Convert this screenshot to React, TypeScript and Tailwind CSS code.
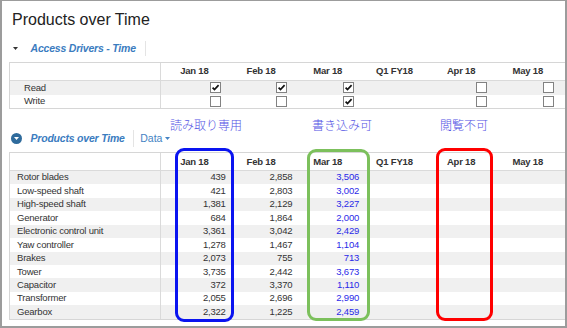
import React from "react";

const months = ["Jan 18", "Feb 18", "Mar 18", "Q1 FY18", "Apr 18", "May 18", ""];

const parts: [string, string, string, string][] = [
  ["Rotor blades", "439", "2,858", "3,506"],
  ["Low-speed shaft", "421", "2,803", "3,002"],
  ["High-speed shaft", "1,381", "2,129", "3,227"],
  ["Generator", "684", "1,864", "2,000"],
  ["Electronic control unit", "3,361", "3,042", "2,429"],
  ["Yaw controller", "1,278", "1,467", "1,104"],
  ["Brakes", "2,073", "755", "713"],
  ["Tower", "3,735", "2,442", "3,673"],
  ["Capacitor", "372", "3,370", "1,110"],
  ["Transformer", "2,055", "2,696", "2,990"],
  ["Gearbox", "2,322", "1,225", "2,459"],
];

// null = no checkbox in that column
const access: { label: string; boxes: (boolean | null)[] }[] = [
  { label: "Read", boxes: [true, true, true, null, false, false, null] },
  { label: "Write", boxes: [false, false, true, null, false, false, null] },
];

function Check({ on }: { on: boolean }) {
  return (
    <span className="inline-flex h-[11px] w-[11px] items-center justify-center border border-[#828282] bg-white">
      {on && (
        <svg width="9" height="9" viewBox="0 0 9 9">
          <path d="M1.6 4.6 L3.5 6.6 L7.6 2.2" fill="none" stroke="#111" strokeWidth="1.7" />
        </svg>
      )}
    </span>
  );
}

function HeaderRow({ h }: { h: string }) {
  return (
    <div className={`flex border-b border-[#dadada] ${h}`}>
      <div className="w-[151px] shrink-0 border-r border-[#dadada]" />
      {months.map((m, i) => (
        <div key={i} className="flex w-[66.7px] shrink-0 items-center justify-center font-bold text-[#333]">
          {m}
        </div>
      ))}
    </div>
  );
}

function Caret({ color }: { color: string }) {
  return (
    <svg width="5" height="3" viewBox="0 0 5 3">
      <path d="M0 0 H5 L2.5 3 Z" fill={color} />
    </svg>
  );
}

export default function App() {
  return (
    <div className="relative h-[328px] w-[567px] overflow-hidden border-x-2 border-b-2 border-t border-[#9c9c9c] bg-white font-['Liberation_Sans',Arial,sans-serif] text-[#333]">
      <div className="h-[30px] pl-[10px] pt-[9px] text-[16px] leading-[20px] text-[#222]">Products over Time</div>

      <div className="mt-[10px] flex h-[15px] items-center">
        <div className="ml-[11px] flex">
          <Caret color="#333" />
        </div>
        <span className="ml-[12.5px] text-[10.5px] font-bold italic tracking-[-0.2px] text-[#3b7cbf]">
          Access Drivers - Time
        </span>
        <div className="ml-[9px] h-[15px] w-px bg-[#e4e4e4]" />
      </div>

      <div className="ml-[7px] mt-[6px] w-[620px] border-y border-l border-[#d6d6d6] text-[9.5px] tracking-[-0.2px]">
        <HeaderRow h="h-[18px]" />
        {access.map((r, ri) => (
          <div key={r.label} className={`flex h-[13.7px] ${ri % 2 === 0 ? "bg-[#f0f0f0]" : "bg-white"}`}>
            <div className="flex w-[151px] shrink-0 items-center border-r border-[#dadada] pl-[14px]">{r.label}</div>
            {r.boxes.map((b, i) => (
              <div key={i} className="flex w-[66.7px] shrink-0 items-center justify-end pr-[7px]">
                {b !== null && <Check on={b} />}
              </div>
            ))}
          </div>
        ))}
      </div>

      <div className="mt-[20px] flex h-[18px] items-center">
        <div className="ml-[9px] flex h-[10.5px] w-[10.5px] items-center justify-center rounded-full bg-[#2f6b9c]">
          <Caret color="#fff" />
        </div>
        <span className="ml-[9px] text-[10.5px] font-bold italic tracking-[-0.2px] text-[#3b7cbf]">
          Products over Time
        </span>
        <div className="ml-[8.5px] h-[17px] w-px bg-[#e4e4e4]" />
        <span className="ml-[6px] text-[10.5px] text-[#4583c3]">Data</span>
        <div className="ml-[3px] flex">
          <Caret color="#4583c3" />
        </div>
      </div>

      <div className="ml-[7px] mt-[5px] w-[620px] border-y border-l border-[#d6d6d6] text-[9.5px] tracking-[-0.2px]">
        <HeaderRow h="h-[17.5px]" />
        {parts.map((p, ri) => (
          <div key={p[0]} className={`flex h-[13.45px] ${ri % 2 === 0 ? "bg-[#f0f0f0]" : "bg-white"}`}>
            <div className="flex w-[151px] shrink-0 items-center border-r border-[#dadada] pl-[7px]">{p[0]}</div>
            <div className="flex w-[66.7px] shrink-0 items-center justify-end pr-[2px]">{p[1]}</div>
            <div className="flex w-[66.7px] shrink-0 items-center justify-end pr-[2px]">{p[2]}</div>
            <div className="flex w-[66.7px] shrink-0 items-center justify-end pr-[2px] text-[#2a2ae8]">{p[3]}</div>
          </div>
        ))}
      </div>

      {/* annotations drawn over the screenshot */}
      <div className="absolute left-[168px] top-[115.5px] font-['Noto_Sans_CJK_JP',sans-serif] text-[12px] font-light leading-[16px] text-[#5252e4]">
        読み取り専用
      </div>
      <div className="absolute left-[310px] top-[115.5px] font-['Noto_Sans_CJK_JP',sans-serif] text-[12px] font-light leading-[16px] text-[#5252e4]">
        書き込み可
      </div>
      <div className="absolute left-[438px] top-[115.5px] font-['Noto_Sans_CJK_JP',sans-serif] text-[12px] font-light leading-[16px] text-[#5252e4]">
        閲覧不可
      </div>
      <div className="absolute left-[173px] top-[146.5px] h-[174px] w-[58.5px] rounded-[9px] border-[3px] border-[#0a14f0]" />
      <div className="absolute left-[305.3px] top-[148px] h-[172px] w-[62.7px] rounded-[9px] border-[3px] border-[#7cc05c]" />
      <div className="absolute left-[433.7px] top-[147.3px] h-[172.7px] w-[57px] rounded-[9px] border-[3px] border-[#ff0000]" />
    </div>
  );
}
